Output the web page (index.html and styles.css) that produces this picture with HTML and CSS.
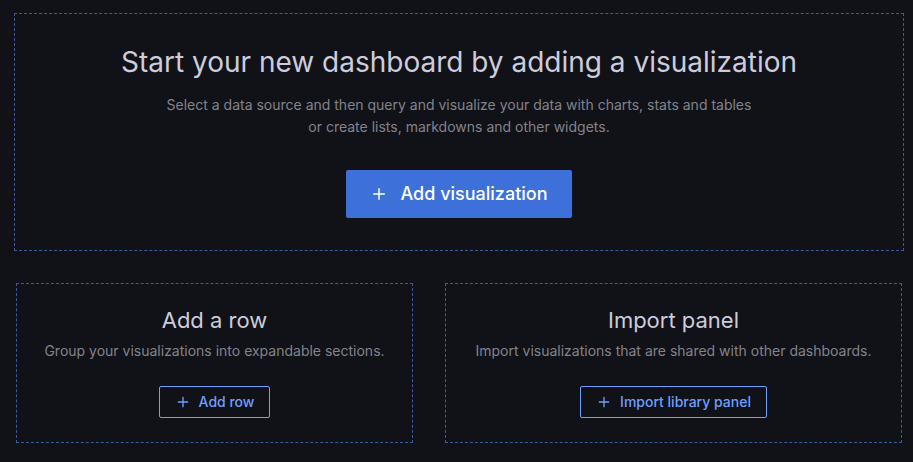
FILE: index.html
```html
<!DOCTYPE html>
<html lang="en">
<head>
<meta charset="utf-8">
<title>New dashboard</title>
<link rel="stylesheet" href="styles.css">
</head>
<body>
<main class="empty-dashboard">
  <section class="box box-main">
    <h1 class="title">Start your new dashboard by adding a visualization</h1>
    <p class="text text-main">Select a data source and then query and visualize your data with charts, stats and tables or create lists, markdowns and other widgets.</p>
    <button class="button button-primary" type="button">
      <svg class="icon icon-large" viewBox="0 0 24 24" aria-hidden="true"><path d="M19,11H13V5a1,1,0,0,0-2,0v6H5a1,1,0,0,0,0,2h6v6a1,1,0,0,0,2,0V13h6a1,1,0,0,0,0-2Z"/></svg>
      <span>Add visualization</span>
    </button>
  </section>
  <div class="options">
    <section class="box box-option">
      <h2 class="subtitle">Add a row</h2>
      <p class="text">Group your visualizations into expandable sections.</p>
      <button class="button button-outline" type="button">
        <svg class="icon" viewBox="0 0 24 24" aria-hidden="true"><path d="M19,11H13V5a1,1,0,0,0-2,0v6H5a1,1,0,0,0,0,2h6v6a1,1,0,0,0,2,0V13h6a1,1,0,0,0,0-2Z"/></svg>
        <span>Add row</span>
      </button>
    </section>
    <section class="box box-option">
      <h2 class="subtitle">Import panel</h2>
      <p class="text">Import visualizations that are shared with other dashboards.</p>
      <button class="button button-outline" type="button">
        <svg class="icon" viewBox="0 0 24 24" aria-hidden="true"><path d="M19,11H13V5a1,1,0,0,0-2,0v6H5a1,1,0,0,0,0,2h6v6a1,1,0,0,0,2,0V13h6a1,1,0,0,0,0-2Z"/></svg>
        <span>Import library panel</span>
      </button>
    </section>
  </div>
</main>
</body>
</html>
```
FILE: styles.css
```css
* {
  box-sizing: border-box;
}

body {
  margin: 0;
  background: #111217;
  color: #ccccdc;
  font-family: Inter, "Liberation Sans", sans-serif;
  font-size: 14px;
  line-height: 22px;
}

h1, h2, p {
  margin: 0;
}

.empty-dashboard {
  display: flex;
  flex-direction: column;
  gap: 32px;
  padding: 13px 9px 19px 14px;
}

.box {
  display: flex;
  flex-direction: column;
  align-items: center;
  border: 1px dashed #3d5b9b;
  text-align: center;
}

.box-main {
  padding: 32px;
}

.box-option {
  padding: 24px;
}

.options {
  display: grid;
  grid-template-columns: 397fr 457fr;
  gap: 32px;
  padding: 0 2px;
}

.title {
  font-size: 28px;
  font-weight: 400;
  line-height: 32px;
}

.subtitle {
  margin-bottom: 8px;
  font-size: 22px;
  font-weight: 400;
  line-height: 24px;
}

.text {
  color: #82838c;
}

.text-main {
  max-width: 600px;
  margin: 16px 0 32px;
}

.button {
  display: inline-flex;
  align-items: center;
  border-radius: 2px;
  font-family: inherit;
  font-weight: 500;
  line-height: 22px;
}

.button-primary {
  gap: 12px;
  height: 48px;
  padding: 0 24px;
  border: 0;
  background: #3d71d9;
  color: #ffffff;
  font-size: 18px;
}

.button-outline {
  gap: 8px;
  height: 32px;
  margin-top: 24px;
  padding: 0 15px;
  border: 1px solid #6e9fff;
  background: transparent;
  color: #6e9fff;
  font-size: 14px;
}

.icon {
  width: 16px;
  height: 16px;
  fill: currentColor;
}

.icon-large {
  width: 18px;
  height: 18px;
}
```
